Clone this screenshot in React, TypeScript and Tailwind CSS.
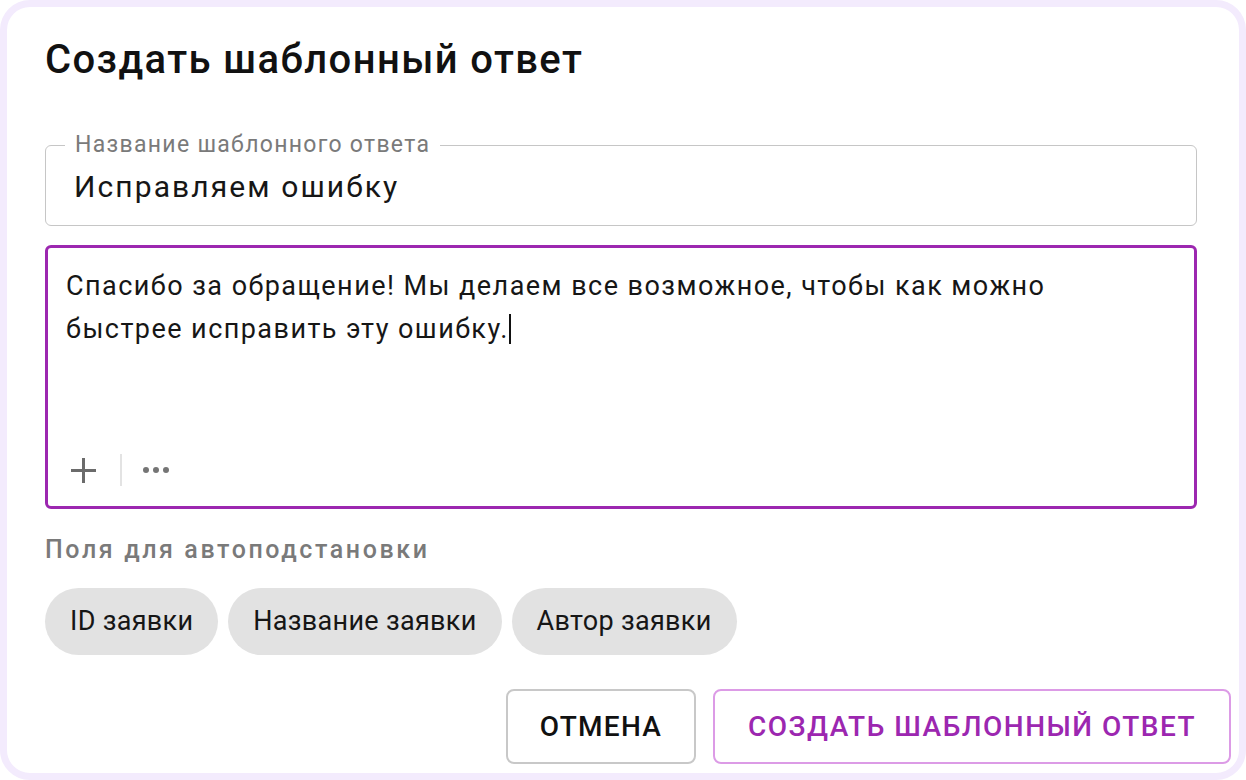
import { useState } from "react";

const FIELDS = ["ID заявки", "Название заявки", "Автор заявки"];

function Toolbar() {
  return (
    <div className="flex items-center">
      <button className="ml-[22px] flex h-8 w-[27px] items-center justify-center text-[#6b6b6b]">
        <svg viewBox="0 0 27 27" className="h-[27px] w-[27px]" fill="none" stroke="currentColor" strokeWidth={3}>
          <path d="M13.5 1v25M1 13.5h25" />
        </svg>
      </button>
      <div className="ml-[23px] h-8 w-[2px] bg-[#e3e3e3]" />
      <button className="ml-[21px] flex items-center gap-[4px]">
        <span className="h-[6px] w-[6px] rounded-full bg-[#757575]" />
        <span className="h-[6px] w-[6px] rounded-full bg-[#757575]" />
        <span className="h-[6px] w-[6px] rounded-full bg-[#757575]" />
      </button>
    </div>
  );
}

export default function App() {
  const [name] = useState("Исправляем ошибку");

  return (
    <div className="h-[780px] w-[1246px] bg-white font-['Roboto',sans-serif]">
      <div className="flex h-full flex-col rounded-[30px] border-[7px] border-[#f3ebfd] bg-white pl-[38px] pr-[8px] pt-[31px]">
        <h1 className="text-[40px] leading-[44px] font-medium tracking-[1.4px] text-[#111]">Создать шаблонный ответ</h1>

        <div className="mr-[34px] mt-[63px] flex flex-col">
          {/* outlined text field, label sits on the top border */}
          <div className="relative h-[81px] rounded-[6px] border border-[#c6c6c6] pl-[28px] pt-[23px]">
            <span className="absolute -top-[14px] left-[19px] bg-white px-[10px] text-[23px] leading-[26px] tracking-[1.3px] text-[#7a7a7a]">
              Название шаблонного ответа
            </span>
            <div className="text-[30px] leading-[36px] tracking-[2.1px] text-[#161616]">{name}</div>
          </div>

          <div className="mt-[19px] flex h-[264px] flex-col justify-between rounded-[6px] border-[3px] border-[#9c27b0] pb-[20px]">
            <p className="pl-[18px] pt-[17px] text-[27px] leading-[43px] tracking-[1.45px] text-[#161616]">
              Спасибо за обращение! Мы делаем все возможное, чтобы как можно
              <br />
              быстрее исправить эту ошибку.
              <span className="inline-block h-[30px] w-[2px] translate-y-[6px] bg-[#111]" />
            </p>
            <Toolbar />
          </div>

          <div className="mt-[26px] text-[25px] leading-[30px] font-medium tracking-[2.6px] text-[#7a7a7a]">
            Поля для автоподстановки
          </div>

          <div className="mt-[23px] flex gap-[10px]">
            {FIELDS.map((f) => (
              <span
                key={f}
                className="flex h-[67px] items-center rounded-full bg-[#e2e2e2] px-[25px] text-[27px] tracking-[0.3px] text-[#161616]"
              >
                {f}
              </span>
            ))}
          </div>
        </div>

        <div className="mt-[34px] flex justify-end gap-[17px]">
          <button className="h-[75px] w-[190px] rounded-[8px] border-2 border-[#c8c8c8] text-[28px] font-medium tracking-[1.3px] text-[#111]">
            ОТМЕНА
          </button>
          <button className="h-[75px] w-[518px] rounded-[8px] border-2 border-[#dc9be6] text-[28px] font-medium tracking-[1.5px] text-[#9c27b0]">
            СОЗДАТЬ ШАБЛОННЫЙ ОТВЕТ
          </button>
        </div>
      </div>
    </div>
  );
}
